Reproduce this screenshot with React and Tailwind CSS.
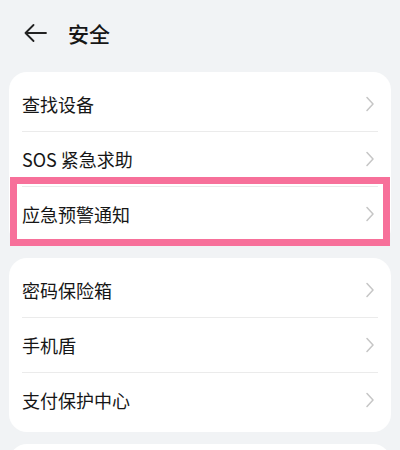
import React from 'react';

const font = { fontFamily: '"Noto Sans CJK SC", "Noto Sans", sans-serif' };

function Chevron() {
  return (
    <svg width="8" height="16" viewBox="0 0 8 16" fill="none">
      <path d="M1 1.5L7 8L1 14.5" stroke="#c6c6c6" strokeWidth="1.5" strokeLinecap="round" strokeLinejoin="round" />
    </svg>
  );
}

function Row({ label, highlight }) {
  return (
    <div className="relative flex h-[54px] items-center justify-between pl-[13px] pr-[17px]">
      <span className="text-[18px] leading-none text-[#161616]">{label}</span>
      <Chevron />
      {highlight && (
        <div className="pointer-events-none absolute -top-[10px] -bottom-[5px] left-[1px] right-[1px] border-[7px] border-[#f7709a]" />
      )}
    </div>
  );
}

function Card({ items, highlightIndex }) {
  return (
    <div className="mx-[9px] rounded-[18px] bg-white py-[5px]">
      {items.map((label, i) => (
        <React.Fragment key={label}>
          {i > 0 && <div className="mx-[13px] h-px bg-[#ebebeb]" />}
          <Row label={label} highlight={i === highlightIndex} />
        </React.Fragment>
      ))}
    </div>
  );
}

export default function App() {
  return (
    <div className="h-[450px] w-[400px] overflow-hidden bg-[#f1f3f5]" style={font}>
      <div className="flex h-[66px] items-center pl-[24px]">
        <svg width="23" height="18" viewBox="0 0 23 18" fill="none">
          <path d="M22 9H1.5M9.5 1L1.5 9L9.5 17" stroke="#222" strokeWidth="1.8" strokeLinecap="round" strokeLinejoin="round" />
        </svg>
        <span className="ml-[21px] text-[21px] font-medium leading-none text-[#161616]">安全</span>
      </div>
      <div className="mt-[6px] flex flex-col gap-[12px]">
        <Card items={['查找设备', 'SOS 紧急求助', '应急预警通知']} highlightIndex={2} />
        <Card items={['密码保险箱', '手机盾', '支付保护中心']} />
        <div className="mx-[9px] h-[60px] rounded-[18px] bg-white" />
      </div>
    </div>
  );
}
